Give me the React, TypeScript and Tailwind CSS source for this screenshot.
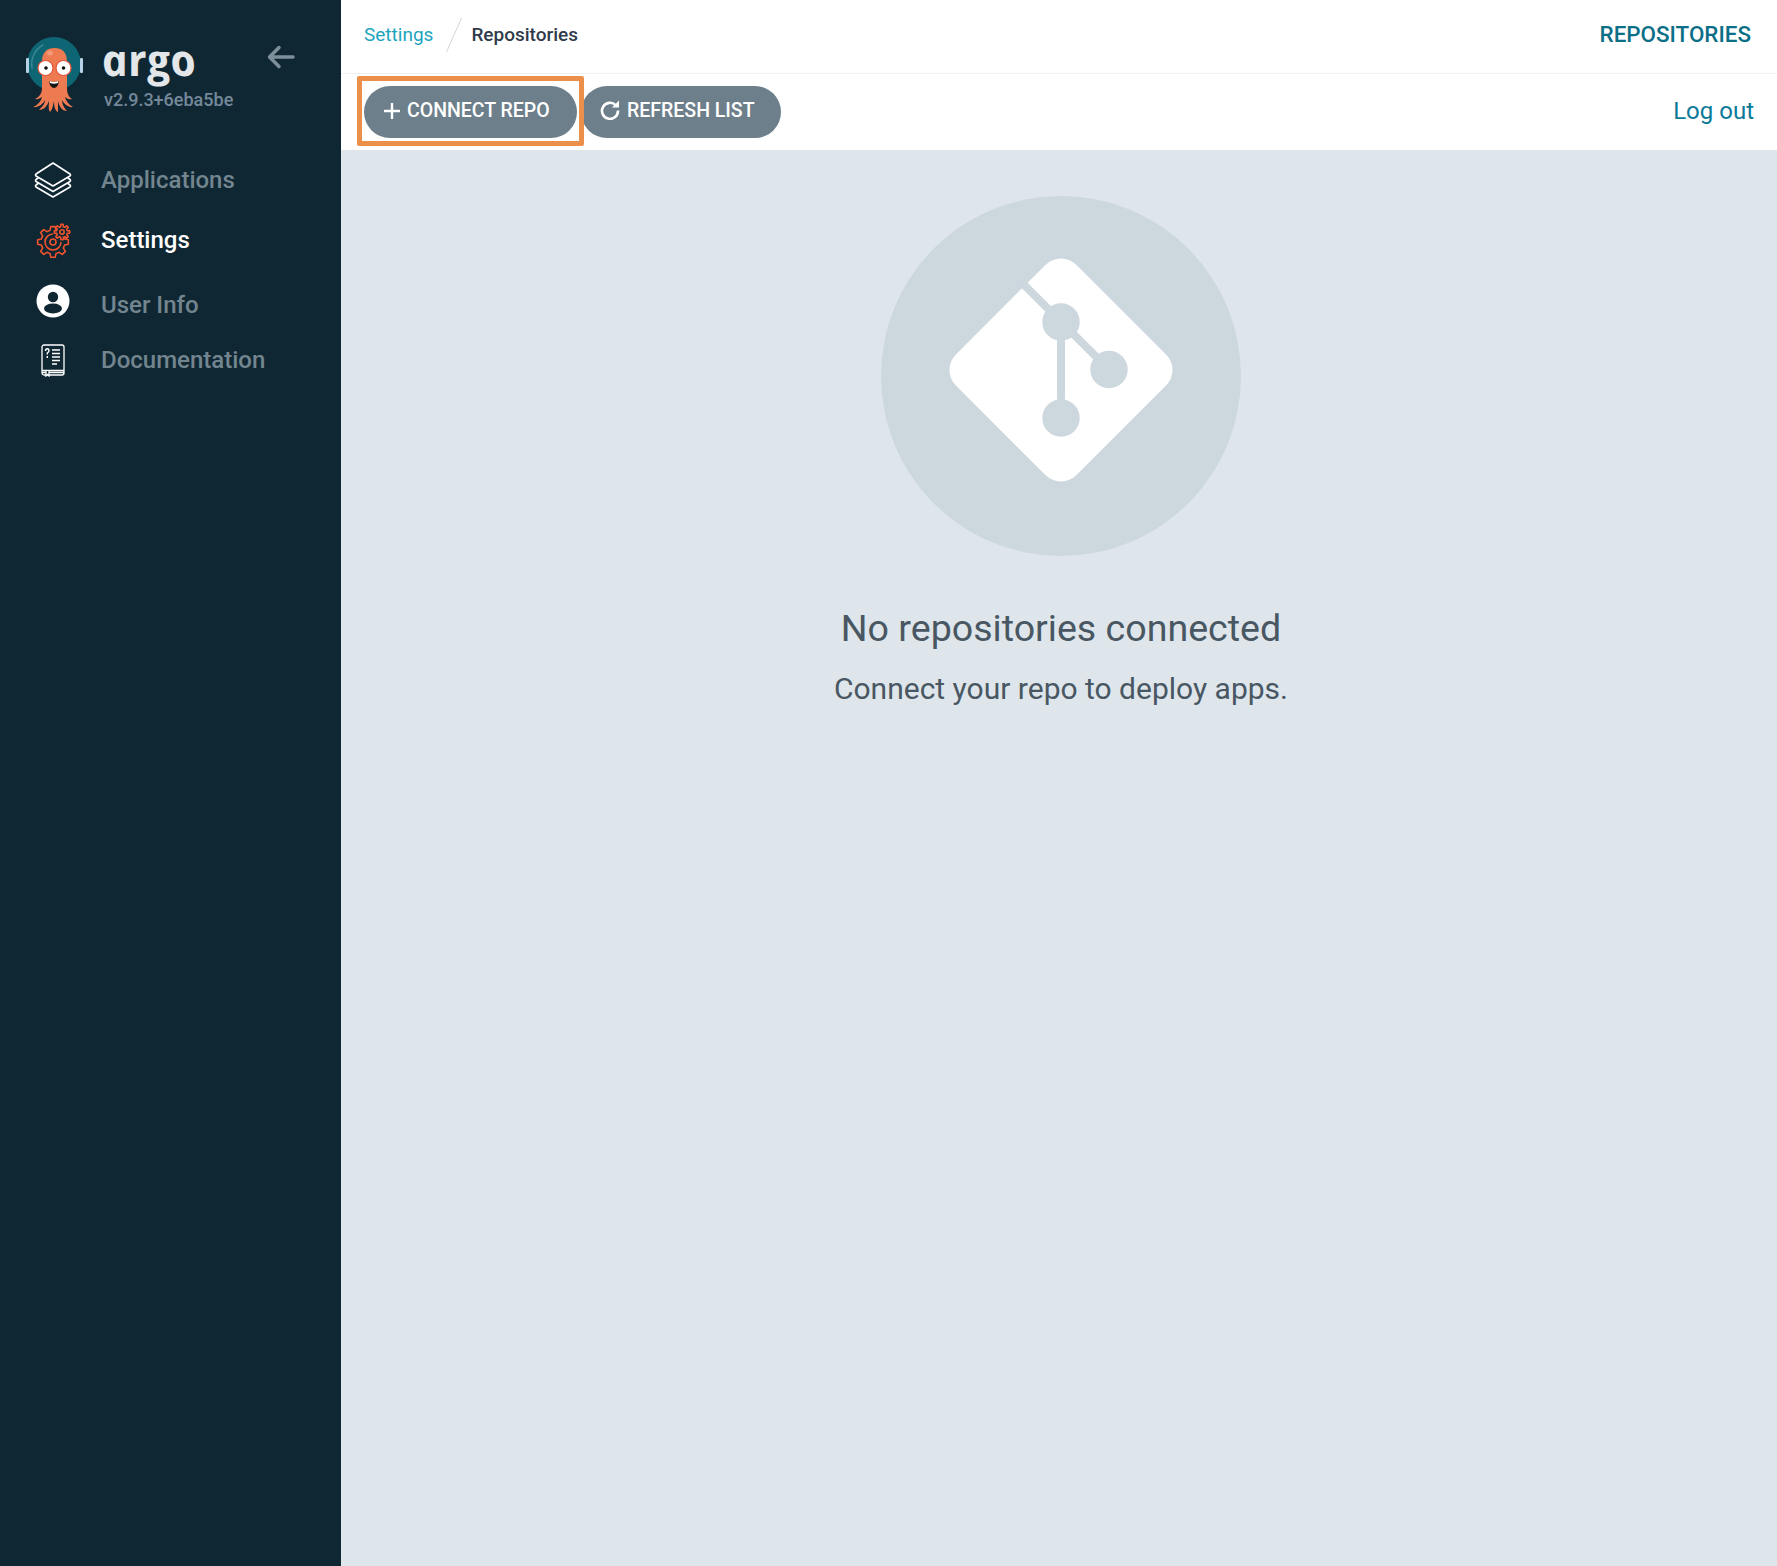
const gearPath = (cx: number, cy: number, inner: number, outer: number, teeth: number) => {
  const pts: string[] = [];
  const step = (Math.PI * 2) / teeth;
  for (let i = 0; i < teeth; i++) {
    const a = i * step;
    const corners: [number, number][] = [
      [inner, a - step * 0.32],
      [outer, a - step * 0.18],
      [outer, a + step * 0.18],
      [inner, a + step * 0.32],
    ];
    corners.forEach(([r, t]) => {
      pts.push(`${(cx + r * Math.cos(t)).toFixed(2)} ${(cy + r * Math.sin(t)).toFixed(2)}`);
    });
  }
  return `M${pts.join("L")}Z`;
};

const Mascot = () => (
  <svg width="70" height="85" viewBox="20 30 70 85" className="block">
    <circle cx="54" cy="64" r="27" fill="#0e6674" />
    <path d="M32 68 A22 22 0 0 1 43 45" stroke="#3b8692" strokeWidth="1.5" fill="none" strokeLinecap="round" />
    <rect x="26" y="58" width="3" height="15" rx="1" fill="#b7d2e6" />
    <rect x="80" y="58" width="3" height="15" rx="1" fill="#b7d2e6" />
    <path
      d="M42 62 C42 52 47 48 54.500 48 C62 48 67 52 67 62 L67 88 C67 94 69 97 72 99 C68 100 67 98 65 97 C66 101 69 105 73 107 C69 108 64 104 62 100 C62 104 64 108 67 111 C62 111 59 106 58 101 C58 106 58 109 58 112 C55 111 54 106 54 101 C53 106 52 110 50 112 C48 109 49 105 49 101 C47 106 44 110 39 110 C42 107 45 104 45 100 C43 104 38 108 33 107 C38 105 41 101 42 97 C40 98 38 100 35 99 C39 97 42 94 42 88 Z"
      fill="#ee7a52"
    />
    <ellipse cx="50" cy="53" rx="3" ry="2.500" fill="#f59a78" />
    <circle cx="45.500" cy="68" r="7.500" fill="#fff" stroke="#e2543a" strokeWidth="1.200" />
    <circle cx="63.500" cy="68" r="7.500" fill="#fff" stroke="#e2543a" strokeWidth="1.200" />
    <circle cx="46" cy="68" r="1.800" fill="#111" />
    <circle cx="63.500" cy="68" r="1.800" fill="#111" />
    <path d="M49 81 Q54 83 59 81 Q58 88 54 88 Q50 88 49 81 Z" fill="#161616" />
    <path d="M49.500 81 Q54 83 58.500 81 L58 83 Q54 84.500 50 83 Z" fill="#fff" />
  </svg>
);

const GitIcon = () => (
  <svg width="224" height="224" viewBox="0 0 224 224" className="overflow-visible">
    <rect x="26.700" y="26.700" width="170.600" height="170.600" rx="22" fill="#fff" transform="rotate(45 112 112)" />
    <path d="M112 64 V160 M62 14 L160 111.500" stroke="#cdd7de" strokeWidth="8" fill="none" />
    <circle cx="112" cy="64" r="18.700" fill="#cdd7de" />
    <circle cx="160" cy="111.500" r="18.700" fill="#cdd7de" />
    <circle cx="112" cy="160" r="18.700" fill="#cdd7de" />
  </svg>
);

const LayersIcon = () => (
  <svg width="38" height="36" viewBox="0 0 38 36" fill="none" stroke="#fff" strokeWidth="1.6" strokeLinejoin="round" strokeLinecap="round">
    <path d="M19 1 L36 12 Q37 13 36 14 L19 24 L2 14 Q1 13 2 12 Z" />
    <path d="M4 16 L2 17.500 Q1 18.500 2 19.500 L19 29.500 L36 19.500 Q37 18.500 36 17.500 L34 16" />
    <path d="M4 21.500 L2 23 Q1 24 2 25 L19 35 L36 25 Q37 24 36 23 L34 21.500" />
  </svg>
);

const GearsIcon = () => (
  <svg width="36" height="36" viewBox="0 0 36 36" fill="none" stroke="#f0532d" strokeWidth="1.6" strokeLinejoin="round">
    <path d={gearPath(18, 20, 12, 15.500, 8)} />
    <circle cx="18" cy="20" r="3" />
    <path d="M18 12 A8 8 0 1 0 26 20" />
    <path d={gearPath(27, 10, 5.500, 7.800, 8)} fill="#0f2733" />
    <circle cx="27" cy="10" r="2.200" />
  </svg>
);

const UserIcon = () => (
  <svg width="34" height="34" viewBox="0 0 34 34">
    <circle cx="17" cy="17" r="16.500" fill="#fff" />
    <circle cx="17" cy="13" r="5.200" fill="#0f2733" />
    <ellipse cx="17" cy="24.500" rx="9" ry="5" fill="#0f2733" />
  </svg>
);

const BookIcon = () => (
  <svg width="24" height="33" viewBox="0 0 24 33" fill="none" stroke="#fff" strokeWidth="1.3">
    <rect x="1" y="1" width="22" height="30" rx="2" />
    <path d="M1 26.500 H23 M1 28.500 H23" />
    <path d="M5 27 V32 L6.500 30.500 L8 32 V27" fill="#0f2733" />
    <path d="M11 6 H19 M11 9.500 H19 M11 13 H19 M11 16.500 H19 M11 20 H16" strokeWidth="1.6" />
    <path d="M4.500 7 Q4.500 4.800 6.300 4.800 Q8 4.800 8 6.800 Q8 8 6.300 9 V10.500 M6.300 12 V14" strokeWidth="1.4" />
  </svg>
);

const RefreshIcon = () => (
  <svg width="20" height="20" viewBox="0 0 20 20" fill="none" stroke="#fff" strokeWidth="2.600">
    <path d="M15.800 5.300 A8 8 0 1 0 18 10.500" />
    <path d="M19 0.500 V7.500 H12 Z" fill="#fff" stroke="none" />
  </svg>
);

const NavItem = ({
  icon,
  label,
  className,
  iconClassName = "",
  labelClassName = "",
  active,
}: {
  icon: React.ReactNode;
  label: string;
  className: string;
  iconClassName?: string;
  labelClassName?: string;
  active?: boolean;
}) => (
  <div className={`flex items-center ${className}`}>
    <div className="flex w-[101px] shrink-0 justify-center">
      <div className={`mr-[-5px] flex w-[38px] justify-center ${iconClassName}`}>{icon}</div>
    </div>
    <span className={`text-[24px] font-medium ${active ? "text-white" : "text-[#73858f]"} ${labelClassName}`}>{label}</span>
  </div>
);

export default function App() {
  return (
    <div className="flex h-[1566px] w-[1777px] overflow-hidden bg-[#dee6eb] font-['Roboto',sans-serif]">
      {/* Sidebar */}
      <aside className="w-[341px] shrink-0 bg-[#0f2733]">
        <div className="flex h-[150px] items-start pl-[20px] pt-[30px]">
          <Mascot />
          <div className="ml-[14px] flex flex-col">
            <span className="ml-[3px] inline-block h-[59px] origin-bottom skew-x-[12deg] font-['Open_Sans',sans-serif] text-[44px] leading-[58px] font-bold text-[#e4e7e9] italic">
              argo
            </span>
            <span className="text-[18px] leading-[22px] font-medium text-[#75889a]">v2.9.3+6eba5be</span>
          </div>
          <svg width="28" height="24" viewBox="0 0 28 24" fill="none" stroke="#7d8f9b" strokeWidth="3.500" strokeLinecap="round" strokeLinejoin="round" className="ml-[34px] mt-[15px]">
            <path d="M2.500 12 H26 M12 2.500 L2.500 12 L12 21.500" />
          </svg>
        </div>
        <NavItem className="h-[60px]" icon={<LayersIcon />} label="Applications" />
        <NavItem className="h-[60px]" icon={<GearsIcon />} label="Settings" active />
        <NavItem className="h-[68px]" icon={<UserIcon />} label="User Info" iconClassName="mb-[7px]" labelClassName="mt-[2px]" />
        <NavItem className="h-[44px]" icon={<BookIcon />} label="Documentation" />
      </aside>

      {/* Main */}
      <main className="flex min-w-0 flex-1 flex-col">
        <div className="relative bg-white">
          <div className="flex h-[74px] items-center justify-between border-b border-[#eff1f3] pb-[3px] pl-[23px] pr-[26px]">
            <div className="flex items-center text-[19px]">
              <span className="text-[#1ba4bd]">Settings</span>
              <svg width="16" height="36" viewBox="0 0 16 36" className="ml-[13px] mr-[9px]">
                <path d="M15.500 1 L0.500 35" stroke="#cfd6db" strokeWidth="1" />
              </svg>
              <span className="font-medium text-[#2f3b4a]">Repositories</span>
            </div>
            <span className="text-[22.400px] font-medium text-[#0b6f88]">REPOSITORIES</span>
          </div>
          <div className="flex h-[76px] items-center justify-between pl-[23px] pr-[23px]">
            <div className="flex items-center gap-[4px]">
              <button className="flex h-[52px] w-[213px] items-center gap-[6px] rounded-full bg-[#6d7f8b] pb-[3px] pl-[19px] text-[19.500px] font-medium text-white">
                <svg width="18" height="18" viewBox="0 0 18 18" stroke="#fff" strokeWidth="2.400">
                  <path d="M9 1 V17 M1 9 H17" />
                </svg>
                CONNECT REPO
              </button>
              <button className="flex h-[52px] w-[200px] items-center gap-[7px] rounded-full bg-[#6d7f8b] pb-[3px] pl-[19px] text-[19.500px] font-medium text-white">
                <span className="mb-[2px]">
                  <RefreshIcon />
                </span>
                REFRESH LIST
              </button>
            </div>
            <span className="mb-[2px] text-[24px] text-[#0b7a99]">Log out</span>
          </div>
          {/* highlight around the connect button */}
          <div className="absolute left-[16px] top-[76px] h-[70px] w-[227px] rounded-[2px] border-[5px] border-[#ec8f4b]" />
        </div>

        <div className="flex flex-col items-center pl-[4px] pt-[46px]">
          <div className="flex h-[360px] w-[360px] items-center justify-center rounded-full bg-[#cdd7de] pb-[13px]">
            <GitIcon />
          </div>
          <h2 className="mt-[49px] text-[37.600px] leading-[46px] font-normal text-[#495763]">No repositories connected</h2>
          <p className="mt-[19px] text-[30px] leading-[38px] text-[#495763]">Connect your repo to deploy apps.</p>
        </div>
      </main>
    </div>
  );
}
